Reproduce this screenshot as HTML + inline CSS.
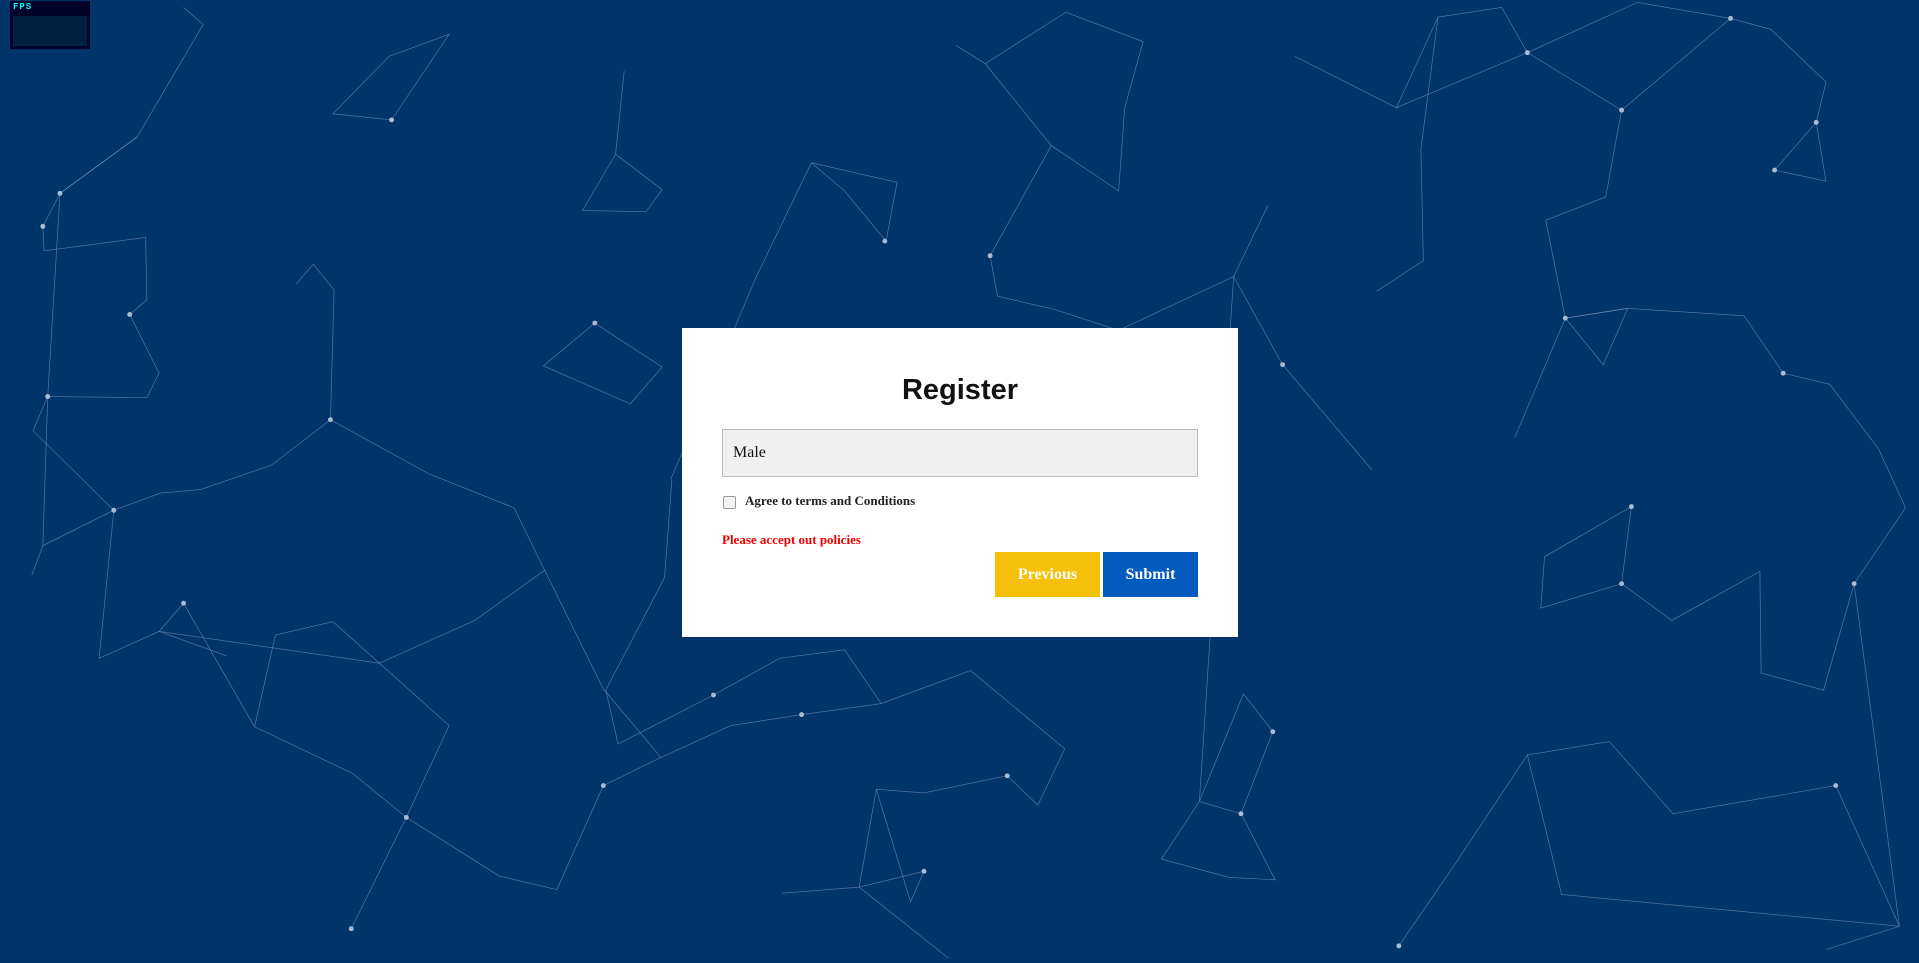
<!DOCTYPE html>
<html><head><meta charset="utf-8"><style>
html,body{margin:0;padding:0;width:1919px;height:963px;overflow:hidden;background:#013469;font-family:"Liberation Serif",serif}
svg.bg{position:absolute;left:0;top:0}
.fps{position:absolute;left:10px;top:1px;width:80px;height:48px;background:#000228}
.fps span{position:absolute;left:3px;top:1px;color:#0ff;font:bold 9px "Liberation Mono",monospace;letter-spacing:1px}
.fps i{position:absolute;left:3px;top:15px;width:74px;height:30px;background:#01203f}
.card{position:absolute;left:682px;top:328px;width:556px;height:309px;background:#fff}
h1{position:absolute;left:0;width:100%;top:46px;margin:0;text-align:center;font:bold 29px "Liberation Sans",sans-serif;color:#111}
.inp{position:absolute;left:40px;top:101px;background:#f0f0f0;border:1px solid #bbb;font-size:16px;line-height:46px;padding-left:10px;box-sizing:border-box;width:476px;height:48px;color:#111}
.cb{position:absolute;left:41px;top:168px;width:11px;height:11px;border:1px solid #999;border-radius:2px;background:#f4f4f4}
.ag{position:absolute;left:63px;top:165px;font-size:13px;font-weight:bold;color:#222}
.err{position:absolute;left:40px;top:204px;font-size:13px;color:#e00;font-weight:bold}
.btn{position:absolute;top:224px;height:45px;color:#fff;font-weight:bold;font-size:16px;text-align:center;line-height:45px}
.p{left:313px;width:105px;background:#f5bf0a}
.s{left:421px;width:95px;background:#035bbd}
</style></head><body>
<svg class="bg" width="1919" height="963" viewBox="0 0 1568 787" preserveAspectRatio="none">
<g stroke="#8fa8c8" stroke-width="0.6" stroke-opacity="0.55" fill="none">
<polyline points="150,6 166,20 112,112 49,158 35,185 36,205 119,194 120,245 106,257 130,305 120,325 39,324 27,352 93,417 131,403 164,400 222,380 270,343 350,387 420,415 445,466 493,563 540,619 597,593 655,584 720,575 793,548 870,612 848,658 823,634 755,648 716,645 702,725 775,783"/>
<polyline points="318,46 367,28 320,98 272,93 318,46"/>
<polyline points="242,232 256,216 273,237 270,343"/>
<polyline points="510,58 503,126 476,172 528,173 541,155 503,126"/>
<polyline points="486,264 444,299 515,330 541,300 486,264"/>
<polyline points="549,392 543,472 495,564 505,608 583,568 637,538 690,531 720,575"/>
<polyline points="663,133 733,149 724,197 690,156 663,133 618,226 548,392"/>
<polyline points="781,37 805,52 859,119 914,156 919,88 934,34 871,10 805,52"/>
<polyline points="859,119 809,209 815,242 862,253 914,270 1008,226 1048,298 1121,384"/>
<polyline points="1036,168 1008,226 980,655 1014,665 1040,598 1016,567 980,655 949,702 1004,717 1042,719 1014,665"/>
<polyline points="1175,14 1227,6 1248,43 1338,2 1414,15 1447,24 1492,67 1484,100 1492,148 1450,139 1484,100"/>
<polyline points="1141,88 1175,14 1161,122 1163,213 1125,238"/>
<polyline points="1325,90 1312,161 1263,180 1279,260 1330,252 1310,298 1279,260"/>
<polyline points="1238,357 1279,260 1330,252 1425,258 1457,305 1495,314 1535,367 1557,415 1515,477 1490,564 1439,550 1438,467 1366,507 1325,477 1333,414 1262,455 1259,497 1325,477"/>
<polyline points="1248,617 1315,606 1367,665 1500,642 1552,757 1515,477"/>
<polyline points="1143,773 1187,709 1248,617 1276,731 1552,757 1492,776"/>
<polyline points="35,446 93,417 81,538 130,516 150,493 208,594 225,519 272,508 310,542 367,593 332,668 288,632 208,594"/>
<polyline points="185,536 130,516 310,542 388,507 445,466"/>
<polyline points="287,759 332,668 408,716 455,727 493,642 540,619"/>
<polyline points="639,730 702,725 755,712 744,737 716,645"/>
<polyline points="1058,46 1141,88 1248,43 1325,90 1414,15"/>
<polyline points="26,470 35,446 39,324 49,158 112,112"/>
</g>
<g fill="#a9bcd6">
<circle cx="49" cy="158" r="2"/><circle cx="35" cy="185" r="2"/><circle cx="106" cy="257" r="2"/><circle cx="39" cy="324" r="2"/><circle cx="93" cy="417" r="2"/><circle cx="150" cy="493" r="2"/><circle cx="320" cy="98" r="2"/><circle cx="486" cy="264" r="2"/><circle cx="723" cy="197" r="2"/><circle cx="809" cy="209" r="2"/><circle cx="583" cy="568" r="2"/><circle cx="655" cy="584" r="2"/><circle cx="823" cy="634" r="2"/><circle cx="755" cy="712" r="2"/><circle cx="1014" cy="665" r="2"/><circle cx="1040" cy="598" r="2"/><circle cx="1325" cy="90" r="2"/><circle cx="1248" cy="43" r="2"/><circle cx="1414" cy="15" r="2"/><circle cx="1484" cy="100" r="2"/><circle cx="1450" cy="139" r="2"/><circle cx="1279" cy="260" r="2"/><circle cx="1457" cy="305" r="2"/><circle cx="1333" cy="414" r="2"/><circle cx="1325" cy="477" r="2"/><circle cx="1515" cy="477" r="2"/><circle cx="1500" cy="642" r="2"/><circle cx="1143" cy="773" r="2"/><circle cx="287" cy="759" r="2"/><circle cx="332" cy="668" r="2"/><circle cx="493" cy="642" r="2"/><circle cx="1048" cy="298" r="2"/><circle cx="270" cy="343" r="2"/>
</g>
</svg>
<div class="fps"><span>FPS</span><i></i></div>
<div class="card">
<h1>Register</h1>
<div class="inp">Male</div>
<div class="cb"></div>
<div class="ag">Agree to terms and Conditions</div>
<div class="err">Please accept out policies</div>
<div class="btn p">Previous</div>
<div class="btn s">Submit</div>
</div>
</body></html>
